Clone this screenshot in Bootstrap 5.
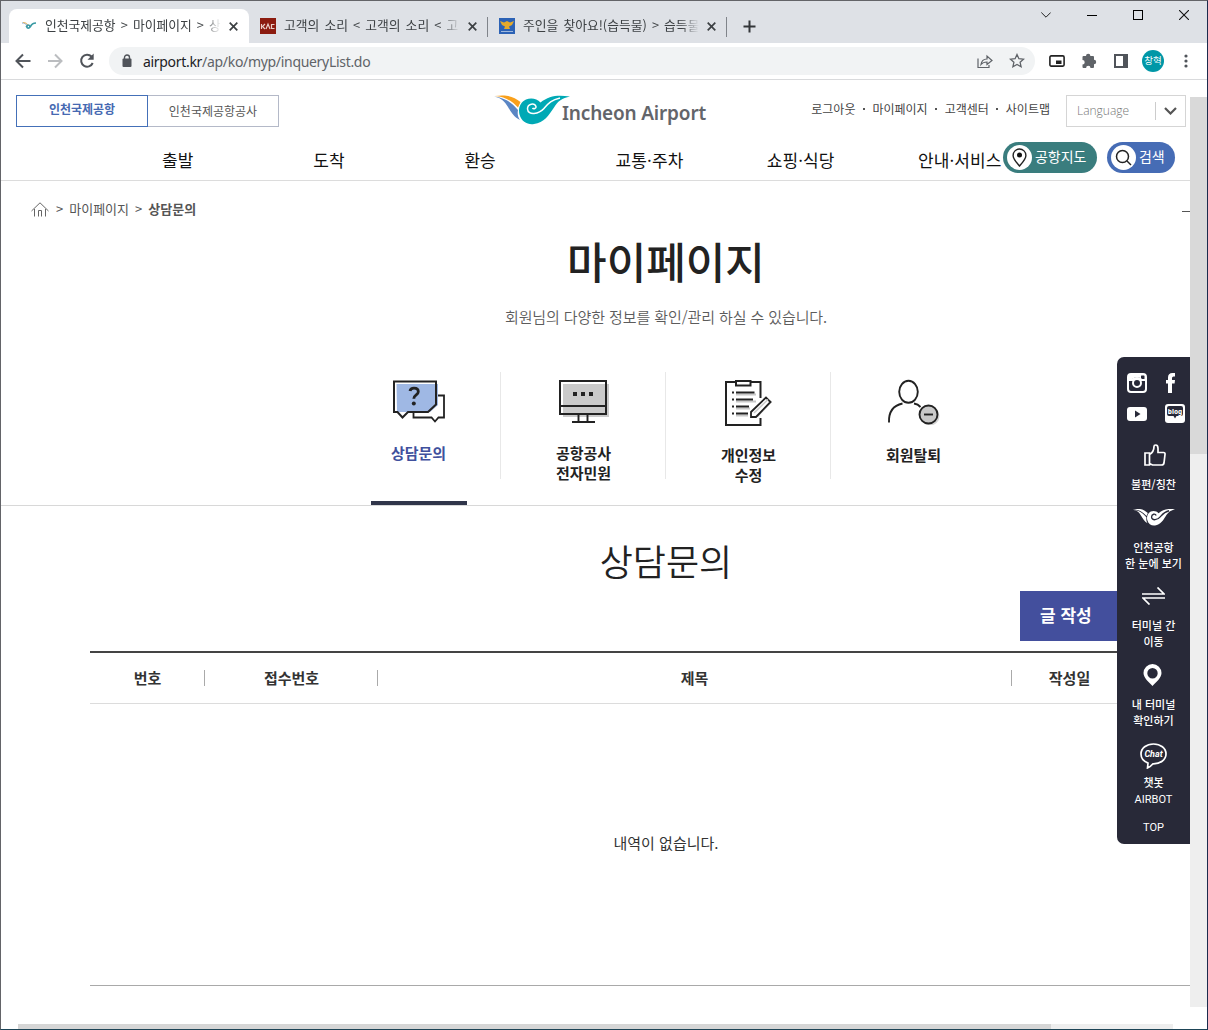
<!DOCTYPE html>
<html lang="ko">
<head>
<meta charset="utf-8">
<meta name="viewport" content="width=device-width, initial-scale=1">
<title>인천국제공항 &gt; 마이페이지 &gt; 상담문의</title>
<link href="https://cdn.jsdelivr.net/npm/bootstrap@5.3.0/dist/css/bootstrap.min.css" rel="stylesheet">
<style>
body{font-family:"Noto Sans CJK KR",sans-serif;color:#222;overflow:hidden;width:1208px;height:1030px;line-height:1}
svg{display:block;flex:none}
.browser{height:1030px;border:1px solid #636468;border-right-color:#1c2b4d;border-bottom-color:#1d4456}
.tabstrip{height:42px;background:#dee1e6;padding:8px 0 0 8px;font-size:12.8px;color:#3c4043}
.tab-item{height:34px;white-space:nowrap}
.tab-item.current{width:240px;background:#fff;border-radius:8px 8px 0 0;padding-left:12px}
.tab-item.second{width:238px;padding-left:11px}
.tab-item.third{width:240px;padding-left:11px}
.tab-label{width:176px;overflow:hidden;line-height:20px;padding-bottom:2px;word-spacing:1.5px;-webkit-mask-image:linear-gradient(90deg,#000 90%,transparent);mask-image:linear-gradient(90deg,#000 90%,transparent)}
.tab-sep{width:1px;height:20px;background:#80848a;flex:none;margin-top:2px}
.win-ctl{gap:36px;padding:7px 18px 0 0;align-self:flex-start}
.win-ctl svg{margin-top:-6px}
.toolbar{height:37px;border-bottom:1px solid #d9dadc;padding-left:12px;color:#5f6368}
.omnibox{width:926px;height:28px;background:#f1f3f4;border-radius:14px;margin-left:13px;padding:0 10px 0 12px;font:14px "Noto Sans","Noto Sans CJK KR",sans-serif;letter-spacing:-.31px}
.omnibox b{font-weight:400;color:#202124}
.avatar{width:22px;height:22px;border-radius:50%;background:#0097a7;color:#fff;font-size:9.5px}
.viewport-area{height:944px}
.page{width:1189px;height:944px;overflow:hidden}
.site-head{height:101px;border-bottom:1px solid #dcdcdc;padding-top:15px}
.site-tab{width:132px;height:32px;border:1px solid #b4b9c8;font-size:12px;color:#555}
.site-tab.on{border-color:#4470b8;color:#4669b2;font-weight:700;z-index:1;padding-bottom:4px}
.site-tab+.site-tab{margin-left:-1px}
.logo-link{margin-left:214px}
.logo-name{font:600 19px "Noto Sans",sans-serif;color:#63656a;margin:5px 0 0 -9px;white-space:nowrap;letter-spacing:-.18px}
.util{font-size:12px;color:#444;gap:7.5px;margin:-4px 16px 0 0;white-space:nowrap}
.util i{width:2px;height:2px;background:#555}
.lang{width:120px;height:32px;border:1px solid #d5d5d5;margin-right:4px;padding-left:10px;font:300 12px "Open Sans",sans-serif;color:#777}
.lang span{width:79px;border-right:1px solid #ccc;line-height:18px}
.gnb{margin-top:15px;padding-left:161px;height:31px;font-size:17px;color:#111}
.gnb a{width:151.2px;padding-top:3px;color:inherit;text-decoration:none;flex:none;white-space:nowrap;letter-spacing:.1px}
.pill{height:31px;border-radius:16px;color:#fff;font-size:14px;padding-left:4px;flex:none;white-space:nowrap;font-weight:400}
.pill>span{padding-bottom:3px}
.disc{width:25px;height:25px;border-radius:50%;background:#fff;display:flex;align-items:center;justify-content:center;flex:none}
.crumb{height:24px;margin-top:16px;padding-left:30px;font-size:13px;color:#555}
.crumb>span,.crumb strong{padding-bottom:2px}
.crumb strong{font-weight:700}
.crumb .tick{width:8px;height:1px;background:#555;margin-top:5px}
.hero{width:1189px;padding-left:141px}
.hero h1{font-size:43px;font-weight:500;line-height:50px;margin:14px 0 0}
.hero p{font-size:15px;font-weight:350;color:#5c5c5c;line-height:20px;margin:22px 0 0;letter-spacing:-.1px}
.my-menu{height:134px;margin-top:44px;padding-left:335px}
.my-menu>div{width:165px;position:relative;font-size:15px;font-weight:700;line-height:20px;text-align:center;display:flex;flex-direction:column;align-items:center}
.my-menu>div:not(:last-child)::after{content:"";position:absolute;right:0;top:1px;height:107px;width:1px;background:#e8e8e8}
.my-menu svg{margin-top:8px}
.my-menu .on{color:#40509d}
.my-menu p{margin:18px 0 0}
.my-menu .bar{width:96px;height:4px;background:#30354a;margin-top:auto}
.rule{border-bottom:1px solid #d8d8d8}
.board{width:1152px;margin-left:89px}
.board h2{font-size:36px;font-weight:350;line-height:44px;text-align:center;margin:32px 0 0}
.write-btn{height:50px;width:222px;border-radius:0;background:#434f9d;color:#fff;font-size:17px;font-weight:700;margin-top:9px;padding:0 20px 3px;line-height:46px;border:0}
.list-head{margin-top:10px;border-top:2px solid #444;border-bottom:1px solid #dcdcdc;height:53px;font-size:15px;font-weight:700;color:#333}
.list-head>div{position:relative;text-align:center;top:-1px}
.list-head>div:not(:last-child)::after{content:"";position:absolute;right:0;top:0;width:1px;height:16px;background:#aaa}
.empty{height:282px;border-bottom:1px solid #a9a9a9;font-size:15px;color:#333;padding-bottom:4px}
.vbar{width:17px;height:910px;margin-top:17px;background:#eee}
.vbar i{display:block;height:357px;background:#d9d9d9}
.hbar{margin-left:17px;width:1155px;height:5px;background:#eee}
.hbar i{display:block;width:1033px;height:5px;background:#d6d6d6}
.quick{position:absolute;left:1117px;top:357px;width:73px;height:487px;background:#282938;border-radius:7px 0 0 7px;color:#fff;font-size:11px;font-weight:500;text-align:center;line-height:16px}
.quick p{margin:0;white-space:nowrap}
.sns{height:54px;margin:16px 0 0 10px;width:60px}
.quick .latin{font-family:Roboto,"Noto Sans CJK KR",sans-serif;font-weight:400;font-size:11px}
</style>
<script src="https://cdn.jsdelivr.net/npm/bootstrap@5.3.0/dist/js/bootstrap.bundle.min.js"></script>
</head>
<body class="position-relative bg-white">
<div class="browser d-flex flex-column">
  <div class="tabstrip d-flex">
    <div class="tab-item current d-flex align-items-center">
      <svg width="16" height="10" viewBox="0 0 16 10"><path d="M1 2q4-1 6 5" stroke="#7ba0cf" fill="none"/><path d="M2 1.500q4 0 5 2.500" stroke="#eab75e" fill="none"/><path d="M15 2q-4 0-5.500 3.500Q7 9 5.500 5.500q2-3 3.500 0" stroke="#3899a3" stroke-width="1.700" fill="none"/></svg>
      <span class="tab-label" style="margin-left:8px">인천국제공항 &gt; 마이페이지 &gt; 상</span>
      <svg class="ms-2" width="9" height="9" viewBox="0 0 9 9" stroke="#3c4043" stroke-width="1.700"><path d="M.7.700l7.600 7.600M8.300.700L.7 8.300"/></svg>
    </div>
    <div class="tab-item second d-flex align-items-center">
      <svg width="16" height="16"><rect width="16" height="16" fill="#8c1c10"/><path d="M1.500 6v5M5 6L2.500 8.500 5 11M6 11l2-5 2 5M14.500 6.500h-3v4h3" stroke="#e9cfc9" stroke-width="1.200" fill="none"/></svg>
      <span class="tab-label ms-2">고객의 소리 &lt; 고객의 소리 &lt; 고</span>
      <svg class="ms-2" width="9" height="9" viewBox="0 0 9 9" stroke="#3c4043" stroke-width="1.700"><path d="M.7.700l7.600 7.600M8.300.700L.7 8.300"/></svg>
    </div>
    <div class="tab-sep align-self-center"></div>
    <div class="tab-item third d-flex align-items-center">
      <svg width="16" height="16"><rect width="16" height="16" fill="#2c62b5"/><path d="M1 3l4 1.500L8 3l3 1.500L15 3l-2 4-3 1.500L11 11H5l1-2.500L3 7z" fill="#e5aa2b"/><path d="M2 13.500h12" stroke="#9fb8dc"/></svg>
      <span class="tab-label ms-2">주인을 찾아요!(습득물) &gt; 습득물</span>
      <svg class="ms-2" width="9" height="9" viewBox="0 0 9 9" stroke="#3c4043" stroke-width="1.700"><path d="M.7.700l7.600 7.600M8.300.700L.7 8.300"/></svg>
    </div>
    <div class="tab-sep align-self-center" style="margin-left:-2px"></div>
    <svg class="align-self-center" style="margin-left:16px" width="13" height="13" viewBox="0 0 13 13" stroke="#333639" stroke-width="2"><path d="M6.500.500v12M.5 6.500h12"/></svg>
    <div class="win-ctl d-flex align-items-center ms-auto" style="color:#111">
      <svg width="10" height="6" viewBox="0 0 10 6" fill="none" stroke="#222"><path d="M.3.500L5 5.200 9.700.500"/></svg>
      <svg width="10" height="2"><rect width="10" height="1" y="1" fill="#000"/></svg>
      <svg width="10" height="10" fill="none" stroke="#000"><rect x=".5" y=".5" width="9" height="9"/></svg>
      <svg width="10" height="10" fill="none" stroke="#111" stroke-width="1.100"><path d="M0 0l10 10M10 0L0 10"/></svg>
    </div>
  </div>
  <div class="toolbar d-flex align-items-center">
    <svg width="19" height="16" viewBox="0 0 19 16" fill="none" stroke="#50545a" stroke-width="2"><path d="M17.500 8H4M10 1.500L3.500 8l6.500 6.500"/></svg>
    <svg style="margin-left:14px" width="17" height="16" viewBox="0 0 17 16" fill="none" stroke="#bbbdc0" stroke-width="2"><path d="M2 8h13.500M9 1.500L15.500 8 9 14.500"/></svg>
    <svg style="margin-left:15px" width="18" height="16" viewBox="0 0 18 16"><path d="M13.500 3.500A6 6 0 1 0 14.700 10" fill="none" stroke="#50545a" stroke-width="2"/><path d="M15.700.500v6.200H9.500z" fill="#50545a"/></svg>
    <div class="omnibox d-flex align-items-center">
      <svg width="12" height="14" viewBox="0 0 12 14"><rect x="1.500" y="4.500" width="9" height="8.500" rx="1" fill="#50545a"/><path d="M3.500 5V3.500a2.500 2.500 0 0 1 5 0V5" stroke="#50545a" stroke-width="1.400" fill="none"/></svg>
      <span style="margin-left:10px"><b>airport.kr</b>/ap/ko/myp/inqueryList.do</span>
      <svg class="ms-auto" width="16" height="15" viewBox="0 0 16 15" fill="none" stroke="#5f6368" stroke-width="1.200"><path d="M1 4.500v9h11V11M4 10.500C4.500 7 7 5 10 5V2l5 4.500-5 4V8C7.500 8 5.500 8.600 4 10.500z"/></svg>
      <svg style="margin:0 0 0 16px" width="16" height="16" viewBox="0 0 16 16" fill="none" stroke="#5f6368" stroke-width="1.300"><path d="M8 1.500l1.900 4.200 4.600.5-3.400 3.100 1 4.500L8 11.500l-4.100 2.300 1-4.500L1.500 6.200l4.600-.5z"/></svg>
    </div>
    <svg style="margin-left:14px" width="16" height="12" viewBox="0 0 16 12"><rect x=".9" y=".9" width="14.200" height="10.200" rx="1.300" fill="none" stroke="#222" stroke-width="1.600"/><rect x="7" y="5.500" width="5.500" height="3.500" fill="#222"/></svg>
    <svg style="margin-left:16px" width="17" height="16" viewBox="0 0 17 16" fill="#5f6368"><path d="M1.500 4q0-1 1-1H5a2.200 2.200 0 1 1 4.400 0H12q1 0 1 1v2.800a2.200 2.200 0 1 1 0 4.400v2.800q0 1-1 1H9.500a2.200 2.200 0 0 0-4.400 0H2.500q-1 0-1-1v-2.500a2.200 2.200 0 0 0 0-4.400z"/></svg>
    <svg style="margin-left:16px" width="14" height="14"><rect width="14" height="14" fill="#50545a"/><rect x="2" y="2" width="7" height="10" fill="#fff"/></svg>
    <span class="avatar d-flex align-items-center justify-content-center" style="margin-left:14px">창혁</span>
    <svg style="margin-left:20px" width="4" height="14" fill="#50545a"><circle cx="2" cy="2" r="1.600"/><circle cx="2" cy="7" r="1.600"/><circle cx="2" cy="12" r="1.600"/></svg>
  </div>

  <div class="viewport-area d-flex">
    <main class="page">
      <header class="site-head">
        <div class="d-flex" style="padding-left:15px">
          <div class="site-tab on position-relative d-flex align-items-center justify-content-center">인천국제공항</div>
          <div class="site-tab d-flex align-items-center justify-content-center">인천국제공항공사</div>
          <div class="logo-link d-flex">
            <svg width="78" height="30" viewBox="0 0 78 30">
              <path d="M1 1.500C9 3 12 7 15 12c3 5 6 10 12 13-2-3-2.800-6-2-10C19 8 13 3 1 1.500z" fill="#5b86c4"/>
              <path d="M2 1C15-.8 21 2 27.500 7L25 12.500C18 5 12 2 2 1z" fill="#f9a01b"/>
              <path d="M77 1.500C65-.3 56 .5 47.500 7.500 44 3.500 38 2.500 33 4.500c-6 3-8 9-6.500 15C28.500 27 35 30 41 29c10-1 15-9 20-16.500C65 6 69 3 77 1.500z" fill="#00a9b5"/>
              <path d="M67 3C58 5 55 9 51 13.500c-5 5.500-16 7.500-16.500.5 0-5.500 7-6.500 8.500-2.500 .5 2-2.500 3-3.500 1.500" fill="none" stroke="#fff" stroke-width="1.500"/>
            </svg>
            <span class="logo-name">Incheon Airport</span>
          </div>
          <div class="util d-flex align-items-center ms-auto"><span>로그아웃</span><i></i><span>마이페이지</span><i></i><span>고객센터</span><i></i><span>사이트맵</span></div>
          <div class="lang d-flex align-items-center"><span>Language</span>
            <svg style="margin-left:8px" width="13" height="8" viewBox="0 0 13 8" fill="none" stroke="#555" stroke-width="2.200"><path d="M1 1l5.500 5.500L12 1"/></svg></div>
        </div>
        <nav class="gnb d-flex align-items-center">
          <a href="#">출발</a><a href="#">도착</a><a href="#">환승</a><a href="#">교통·주차</a><a href="#">쇼핑·식당</a><a href="#" style="width:85px">안내·서비스</a>
          <div class="pill d-flex align-items-center" style="width:94px;background:#3a7d7e">
            <span class="disc p-0"><svg width="15" height="19" viewBox="0 0 15 19"><path d="M7.500 1a6.400 6.400 0 0 0-6.400 6.400C1.100 11 5 15 7.500 18c2.500-3 6.400-7 6.400-10.600A6.400 6.400 0 0 0 7.500 1z" fill="none" stroke="#222" stroke-width="1.400"/><circle cx="7.500" cy="7" r="2.500" fill="#111"/></svg></span>
            <span style="margin-left:3px">공항지도</span></div>
          <div class="pill d-flex align-items-center" style="width:68px;background:#466cb5;margin-left:10px">
            <span class="disc p-0"><svg width="17" height="17" viewBox="0 0 17 17" fill="none" stroke="#222" stroke-width="1.500"><circle cx="7.500" cy="7.500" r="6"/><path d="M12 12l4 4"/></svg></span>
            <span style="margin-left:3px">검색</span></div>
        </nav>
      </header>

      <div class="crumb d-flex align-items-center">
        <svg width="18" height="15" viewBox="0 0 18 15" fill="none" stroke="#666"><path d="M.5 9L9 .800 17.500 9M3.500 7v7.500M14.500 7v7.500M7.500 14.500v-6h3v6"/></svg>
        <span style="margin-left:7px">&gt;</span><span style="margin-left:6px">마이페이지</span><span style="margin-left:6px">&gt;</span><strong style="margin-left:6px">상담문의</strong>
        <i class="tick ms-auto"></i>
      </div>

      <section>
        <div class="hero text-center">
          <h1>마이페이지</h1>
          <p>회원님의 다양한 정보를 확인/관리 하실 수 있습니다.</p>
        </div>
        <div class="my-menu d-flex">
          <div class="on">
            <svg width="54" height="46" viewBox="0 0 54 46"><path d="M4.500 5H46v21l-8 7H5z" fill="#9fb8e4"/><path d="M46 16.500h6v22h-5.500L43 42.500l-3.500-4H21.500V33" fill="none" stroke="#222" stroke-width="1.800"/><path d="M2 2.500h42v23l-8 7.500H16l-5.500 5.500L5.500 33H2z" fill="none" stroke="#222" stroke-width="2"/><path d="M18 12q.5-2.800 4-2.800 4.300 0 4.300 3.500c0 3.300-4.500 3-4.500 7" fill="none" stroke="#222" stroke-width="2.800"/><circle cx="21.800" cy="24.500" r="2" fill="#222"/></svg>
            <p>상담문의</p><span class="bar"></span>
          </div>
          <div>
            <svg width="51" height="46" viewBox="0 0 51 46"><path d="M5 5h46v33H5z" fill="#cacaca"/><path d="M2 2h46v33H2z" fill="none" stroke="#222" stroke-width="2"/><path d="M2 27h46" stroke="#222" stroke-width="2"/><path d="M20.500 35v8M29.500 35v8M14 43h23" stroke="#222" stroke-width="1.900"/><path d="M15 13h4v4h-4zM23 13h4v4h-4zM31 13h4v4h-4z" fill="#222"/></svg>
            <p>공항공사<br>전자민원</p>
          </div>
          <div>
            <svg width="49" height="48" viewBox="0 0 49 48"><path d="M12 3H2v43h34.500v-7M36.500 19V3H26M12 2h14.500v4.500H12z" fill="none" stroke="#222" stroke-width="2"/><path d="M12 15.500h20M12 22.500h20M12 29.500h14M12 36.500h12" stroke="#c8c8c8" stroke-width="2"/><path d="M8 13.500h2M12 13.500h18.500M8 20.500h2M12 20.500h17M8 27.500h2M12 27.500h13M8 34.500h2M12 34.500h12" stroke="#222" stroke-width="2"/><path d="M29 38h5l14-15-2-2z" fill="#bdbdbd"/><path d="M27 38v-5l15-14.500 4.500 4.500L32 38z" fill="#fff" stroke="#222" stroke-width="1.800"/><path d="M30 34l14-13.500" stroke="#ccc" stroke-width="1.500"/></svg>
            <p>개인정보<br>수정</p>
          </div>
          <div>
            <svg width="54" height="46" viewBox="0 0 54 46" fill="none" stroke="#222" stroke-width="1.900"><ellipse cx="21.500" cy="12.800" rx="9.300" ry="11"/><path d="M2 43.500C1.500 32 6 26.500 15.500 24.500M27 24.500q4 .7 6.500 3.500"/><circle cx="43" cy="37" r="9.500" fill="#d5d5d5" stroke="none"/><circle cx="41.500" cy="35.500" r="9" fill="#c9c9c9"/><path d="M37 35.500h9"/></svg>
            <p style="margin-top:20px">회원탈퇴</p>
          </div>
        </div>
        <div class="rule"></div>
      </section>

      <section class="board">
        <h2>상담문의</h2>
        <div class="d-flex justify-content-end"><button class="write-btn btn text-start" type="button">글 작성</button></div>
        <div class="list-head d-flex align-items-center">
          <div style="width:115px">번호</div><div style="width:173px">접수번호</div><div style="width:634px;padding-right:1px">제목</div><div style="width:115px">작성일</div><div class="flex-grow-1"></div>
        </div>
        <div class="empty d-flex align-items-center justify-content-center">내역이 없습니다.</div>
      </section>
    </main>
    <div class="vbar"><i></i></div>
  </div>
  <div class="hbar"><i></i></div>
</div>

<aside class="quick d-flex flex-column align-items-center">
  <div class="sns align-self-start">
    <div class="d-flex align-items-center">
      <svg width="20" height="20" viewBox="0 0 20 20"><rect x="1" y="1" width="18" height="18" rx="3" fill="none" stroke="#fff" stroke-width="2"/><path d="M1 3q0-2 2-2h14q2 0 2 2v5H1z" fill="#fff"/><rect x="14" y="2.500" width="3.500" height="3.500" rx=".6" fill="#282938"/><circle cx="10" cy="10" r="6" fill="#282938"/><path d="M3.500 8Q5.500 4 10 4t6.500 4z" fill="#fff"/><circle cx="10" cy="10" r="4" fill="#282938" stroke="#fff" stroke-width="2"/></svg>
      <svg style="margin-left:19px" width="9" height="20" viewBox="0 0 9 20" fill="#fff"><path d="M2 20V10.500H0V7h2V4.500Q2 0 6.500 0H9v3.500H7.500Q6 3.500 6 5v2h3l-.4 3.500H6V20z"/></svg>
    </div>
    <div class="d-flex align-items-center" style="margin-top:11px">
      <svg width="20" height="14" viewBox="0 0 20 14"><rect width="20" height="14" rx="3" fill="#fff"/><path d="M8 3.500v7l5.500-3.500z" fill="#282938"/></svg>
      <svg style="margin-left:18px" width="20" height="19" viewBox="0 0 20 19"><rect width="20" height="19" rx="3" fill="#fff"/><path d="M4 2h12q2 0 2 2v6q0 2-2 2h-4.500L10 14.500 8.500 12H4q-2 0-2-2V4q0-2 2-2z" fill="#282938"/><text x="10" y="9.500" text-anchor="middle" font-family="Noto Sans" font-weight="800" font-size="6.500" fill="#fff">blog</text></svg>
    </div>
  </div>
  <svg style="margin-top:17px;margin-left:2px" width="22" height="22" viewBox="0 0 22 22" fill="none" stroke="#fff" stroke-width="1.700"><path d="M1 9h4.500v12H1zM5.500 10.500Q10 8 10 2.500 10 1 11.700 1q2.300 0 2.300 3.500V8.500h5.500q1.800 0 1.500 2L20 19q-.4 2-2.500 2h-9l-3-1.500"/></svg>
  <p style="margin-top:10px">불편/칭찬</p>
  <svg style="margin-top:17px" width="42" height="17" viewBox="0 0 78 30" preserveAspectRatio="none" fill="#fff"><path d="M0 1.500C9 3 12 7 15 12c3 5 6 10 12 13-2-3-2.800-6-2-10C19 8 13 3 0 1.500z"/><path d="M0 0C15-1.800 21 2 27.500 7L25 12.500C18 5 12 2 0 0z"/><path d="M78 .500C65-1 56 0 47.500 7.500 44 3.500 38 2.500 33 4.500c-6 3-8 9-6.500 15C28.500 27 35 30 41 29c10-1 15-9 20-16.500C65 6 69 3 78 .500z"/><path d="M67 3C58 5 55 9 51 13.500c-5 6-16 8-16.500.5 0-5.500 7-6.500 8.500-2.500" fill="none" stroke="#282938" stroke-width="2.500"/></svg>
  <p style="margin-top:13px">인천공항<br>한 눈에 보기</p>
  <svg style="margin-top:16px" width="23" height="18" viewBox="0 0 23 18" fill="none" stroke="#fff" stroke-width="1.700"><path d="M0 7h22L15.500.500M23 11H1l6.500 6.500"/></svg>
  <p style="margin-top:12px">터미널 간<br>이동</p>
  <svg style="margin-top:15px;margin-right:2px" width="19" height="22" viewBox="0 0 19 22"><path fill-rule="evenodd" d="M9.500 0A9 9 0 0 0 .5 9c0 5 5.500 9 9 13 3.500-4 9-8 9-13a9 9 0 0 0-9-9zm0 4a5.200 5.200 0 1 1 0 10.400A5.200 5.200 0 0 1 9.500 4z" fill="#fff"/></svg>
  <p style="margin-top:10px">내 터미널<br>확인하기</p>
  <svg style="margin-top:15px" width="27" height="26" viewBox="0 0 27 26"><path d="M13.500 1C6.500 1 1 5 1 11c0 4 3 7.500 7 9l-.5 5q3-1.200 5.500-4.200C20 21 26 17 26 11S20.500 1 13.500 1z" fill="none" stroke="#fff" stroke-width="1.700"/><text x="13.500" y="14" text-anchor="middle" font-family="Roboto" font-weight="700" font-style="italic" font-size="9" fill="#fff">Chat</text></svg>
  <p style="margin-top:5px">챗봇</p>
  <p class="latin" style="margin-top:2px">AIRBOT</p>
  <p class="latin" style="margin-top:12px">TOP</p>
</aside>
</body>
</html>
